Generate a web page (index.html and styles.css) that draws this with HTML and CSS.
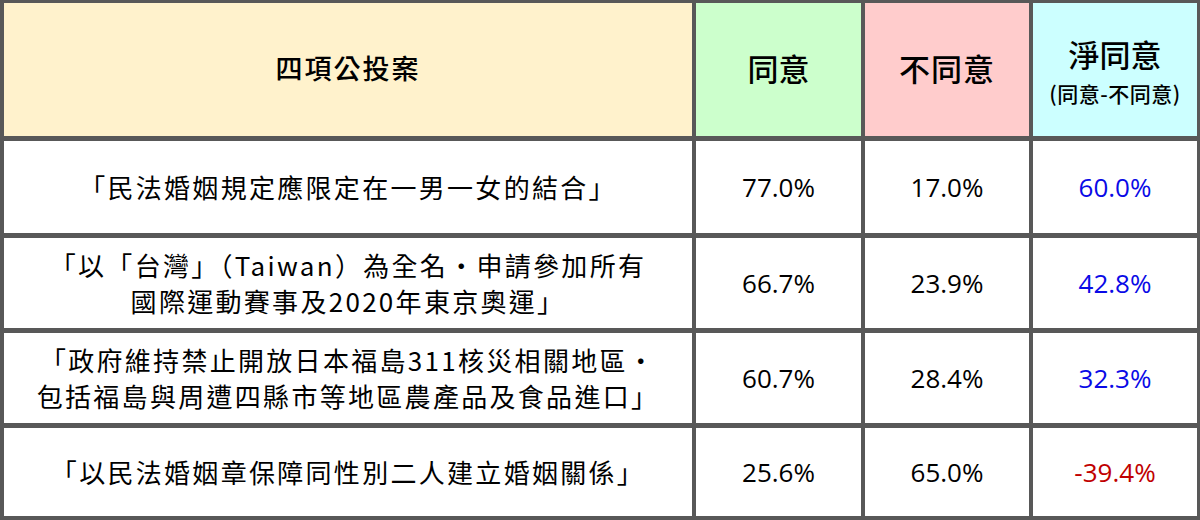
FILE: index.html
```html
<!DOCTYPE html>
<html lang="zh-Hant">
<head>
<meta charset="utf-8">
<title>四項公投案</title>
<link rel="stylesheet" href="styles.css">
</head>
<body>
<div class="table">
  <div class="cell head head-title">四項公投案</div>
  <div class="cell head head-agree">同意</div>
  <div class="cell head head-disagree">不同意</div>
  <div class="cell head head-net"><span class="net-main">淨同意</span><span class="net-sub">(同意-不同意)</span></div>

  <div class="cell item">「民法婚姻規定應限定在一男一女的結合」</div>
  <div class="cell num">77.0%</div>
  <div class="cell num">17.0%</div>
  <div class="cell num pos">60.0%</div>

  <div class="cell item">「以「台灣」（Taiwan）為全名・申請參加所有<br>國際運動賽事及2020年東京奧運」</div>
  <div class="cell num">66.7%</div>
  <div class="cell num">23.9%</div>
  <div class="cell num pos">42.8%</div>

  <div class="cell item">「政府維持禁止開放日本福島311核災相關地區・<br>包括福島與周遭四縣市等地區農產品及食品進口」</div>
  <div class="cell num">60.7%</div>
  <div class="cell num">28.4%</div>
  <div class="cell num pos">32.3%</div>

  <div class="cell item">「以民法婚姻章保障同性別二人建立婚姻關係」</div>
  <div class="cell num">25.6%</div>
  <div class="cell num">65.0%</div>
  <div class="cell num neg">-39.4%</div>
</div>
</body>
</html>
```

FILE: styles.css
```css
html, body {
  margin: 0;
  padding: 0;
  background: #ffffff;
}

.table {
  width: 1200px;
  height: 520px;
  box-sizing: border-box;
  padding: 3px 3px 4px 4px;
  background: #585858;
  display: grid;
  grid-template-columns: 688px 165px 164px 164px;
  grid-template-rows: 133px 92px 90px 90px 88px;
  gap: 5px 4px;
  font-family: "Noto Sans CJK TC", "Noto Sans", sans-serif;
  color: #000000;
}

.cell {
  background: #ffffff;
  display: flex;
  align-items: center;
  justify-content: center;
  text-align: center;
}

.head {
  font-weight: 500;
  padding-bottom: 5px;
  box-sizing: border-box;
}

.head-title { background: #fff2cc; font-size: 27px; letter-spacing: 2px; }
.head-agree { background: #ccffcc; font-size: 31px; }
.head-disagree { background: #ffcccc; font-size: 31px; letter-spacing: 1px; }

.head-net {
  background: #ccffff;
  flex-direction: column;
  padding-bottom: 0;
}

.net-main {
  font-size: 31px;
  line-height: 40px;
}

.net-sub {
  font-size: 21px;
  line-height: 26px;
  margin-top: 6px;
  letter-spacing: 0.5px;
}

.item {
  font-size: 26px;
  letter-spacing: 2.3px;
  line-height: 36px;
}

.num {
  font-family: "Open Sans", "Noto Sans", sans-serif;
  font-size: 26px;
}

.pos { color: #0a0ae6; }
.neg { color: #c00000; }
```
